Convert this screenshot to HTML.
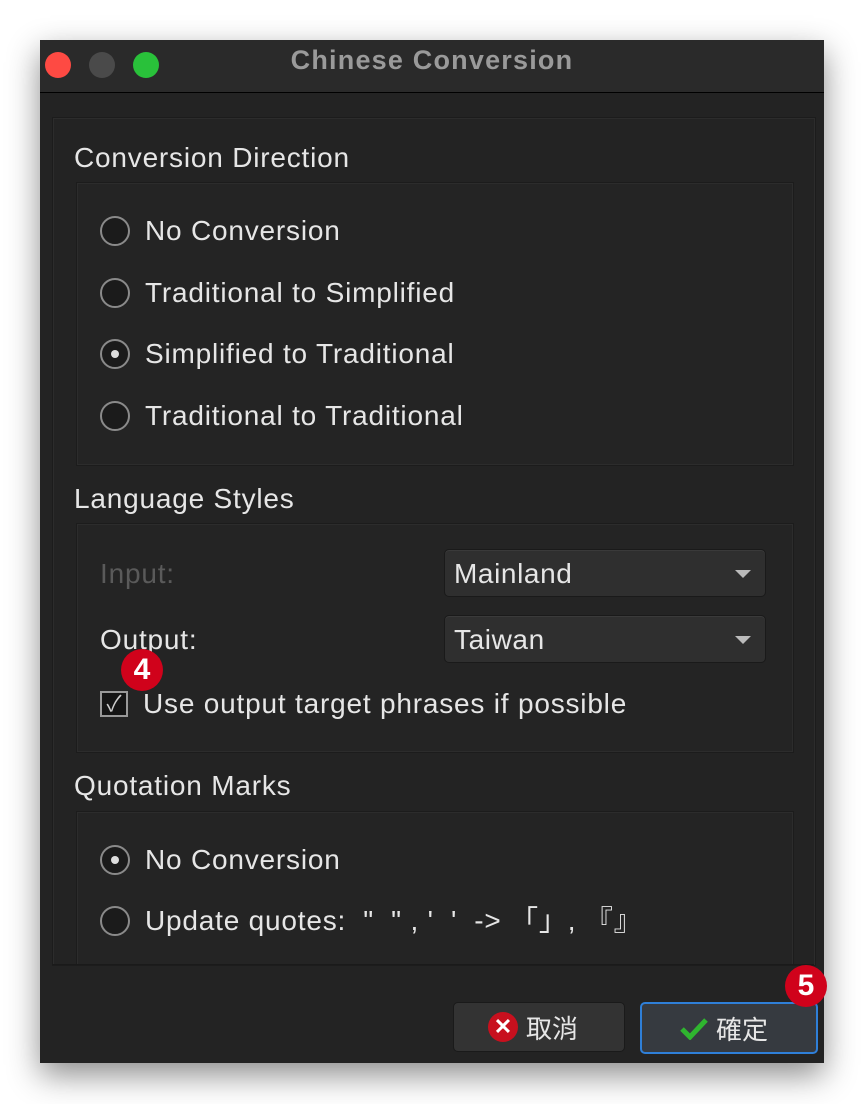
<!DOCTYPE html>
<html><head><meta charset="utf-8"><style>
body{margin:0;width:864px;height:1104px;background:#fff;position:relative;overflow:hidden;font-family:"Liberation Sans","Noto Sans CJK TC",sans-serif;}
.win{position:absolute;left:40px;top:40px;width:784px;height:1023px;background:#232323;box-shadow:0 12px 30px rgba(0,0,0,.45);}
.tb{position:absolute;left:0;top:0;width:784px;height:52px;background:#2a2a2a;border-bottom:1px solid #000;}
.dot{position:absolute;top:12px;width:26px;height:26px;border-radius:50%;}
.t{position:absolute;color:#e6e6e6;font-size:28px;letter-spacing:0.8px;white-space:nowrap;line-height:30px;}
.box{position:absolute;border:1px solid #1c1c1c;background:#242424;box-shadow:inset 0 0 0 1px #2c2c2c;}
.rad{position:absolute;width:30px;height:30px;border-radius:50%;border:2px solid #8a8a8a;background:#1b1b1b;box-sizing:border-box;}
.rad.on::after{content:"";position:absolute;left:9px;top:9px;width:8px;height:8px;border-radius:50%;background:#ddd;}
.combo{position:absolute;left:404px;width:320px;height:46px;border-radius:5px;background:#2f2f2f;border:1px solid #1a1a1a;box-shadow:0 1px 0 #3a3a3a inset;}
.combo span{position:absolute;left:9px;top:8px;font-size:28px;letter-spacing:.6px;color:#e6e6e6;}
.combo i{position:absolute;right:14px;top:20px;border-left:8px solid transparent;border-right:8px solid transparent;border-top:8px solid #bbb;}
.badge{position:absolute;width:42px;height:42px;border-radius:50%;background:#d0021b;color:#fff;font-weight:bold;font-size:30px;text-align:center;line-height:42px;}
.btn{position:absolute;top:962px;height:48px;border-radius:5px;background:#333;border:1px solid #1a1a1a;color:#e6e6e6;font-size:26px;}
</style></head><body>
<div class="win">
 <div class="tb">
  <div class="dot" style="left:5px;background:#fe4a43"></div>
  <div class="dot" style="left:49px;background:#4a4a4a"></div>
  <div class="dot" style="left:93px;background:#29c13a"></div>
  <div style="position:absolute;left:0;width:784px;top:5px;text-align:center;color:#9a9a9a;font-weight:bold;font-size:27px;letter-spacing:1.2px">Chinese Conversion</div>
 </div>
 <div class="box" style="left:12px;top:77px;width:762px;height:847px;background:#232323"></div>
 <div class="t" style="left:34px;top:103px">Conversion Direction</div>
 <div class="box" style="left:36px;top:142px;width:716px;height:282px"></div>
 <div class="rad" style="left:60px;top:176px"></div><div class="t" style="left:105px;top:176px">No Conversion</div>
 <div class="rad" style="left:60px;top:238px"></div><div class="t" style="left:105px;top:238px">Traditional to Simplified</div>
 <div class="rad on" style="left:60px;top:299px"></div><div class="t" style="left:105px;top:299px">Simplified to Traditional</div>
 <div class="rad" style="left:60px;top:361px"></div><div class="t" style="left:105px;top:361px">Traditional to Traditional</div>
 <div class="t" style="left:34px;top:444px">Language Styles</div>
 <div class="box" style="left:36px;top:483px;width:716px;height:228px"></div>
 <div class="t" style="left:60px;top:519px;color:#5a5a5a">Input:</div>
 <div class="combo" style="top:509px"><span>Mainland</span><i></i></div>
 <div class="t" style="left:60px;top:585px">Output:</div>
 <div class="combo" style="top:575px"><span>Taiwan</span><i></i></div>
 <div style="position:absolute;left:60px;top:651px;width:28px;height:26px;border:2px solid #999;background:#151515;box-sizing:border-box;color:#ccc;font-size:22px;line-height:22px;text-align:center">✓</div>
 <div class="t" style="left:103px;top:649px">Use output target phrases if possible</div>
 <div class="badge" style="left:81px;top:609px">4</div>
 <div class="t" style="left:34px;top:731px">Quotation Marks</div>
 <div class="box" style="left:36px;top:771px;width:716px;height:153px;border-bottom:none"></div>
 <div class="rad on" style="left:60px;top:805px"></div><div class="t" style="left:105px;top:805px">No Conversion</div>
 <div class="rad" style="left:60px;top:866px"></div><div class="t" style="left:105px;top:866px;height:30px">Update quotes: &nbsp;" &nbsp;" , ' &nbsp;' &nbsp;-&gt; 「」, 『』</div>
 <div style="position:absolute;left:12px;top:924px;width:762px;height:1px;background:#1a1a1a"></div>
 <div class="btn" style="left:413px;width:170px">
  <div style="position:absolute;left:34px;top:9px;width:30px;height:30px;border-radius:50%;background:#c8101e;color:#fff;font-weight:bold;font-size:22px;line-height:30px;text-align:center">✕</div>
  <span style="position:absolute;left:72px;top:6px">取消</span></div>
 <div class="btn" style="left:600px;width:174px;border:2px solid #2f7fd8;background:#363a40">
  <svg style="position:absolute;left:38px;top:12px" width="28" height="24" viewBox="0 0 28 24"><path d="M2 13 L10 21 L26 4" stroke="#2fb52f" stroke-width="5" fill="none"/></svg>
  <span style="position:absolute;left:74px;top:6px">確定</span></div>
 <div class="badge" style="left:745px;top:925px">5</div>
</div>
</body></html>
